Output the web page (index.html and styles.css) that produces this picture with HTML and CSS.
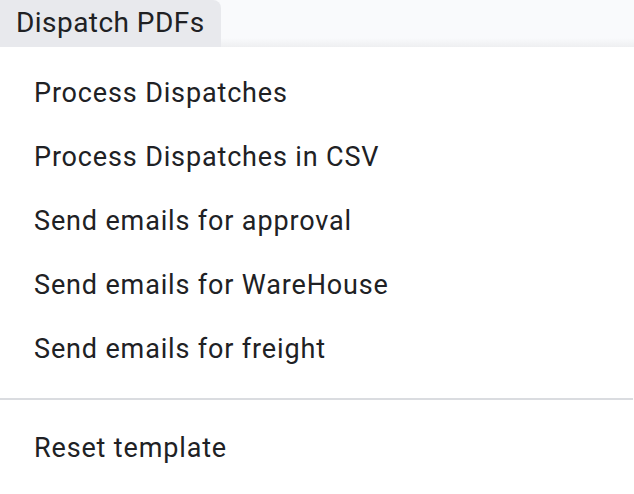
FILE: index.html
```html
<!DOCTYPE html>
<html>
<head>
<meta charset="utf-8">
<link rel="stylesheet" href="styles.css">
</head>
<body>
<div class="bar">
  <div class="tab">Dispatch PDFs</div>
</div>
<div class="menu">
  <div class="item">Process Dispatches</div>
  <div class="item">Process Dispatches in CSV</div>
  <div class="item">Send emails for approval</div>
  <div class="item">Send emails for WareHouse</div>
  <div class="item">Send emails for freight</div>
  <div class="sep"></div>
  <div class="item">Reset template</div>
</div>
</body>
</html>
```
FILE: styles.css
```css
html, body {
  margin: 0;
  padding: 0;
  background: #ffffff;
  font-family: Roboto, "Noto Sans", sans-serif;
  color: #202124;
}
.bar {
  height: 47px;
  background: linear-gradient(to bottom, #f9fafc 0, #f9fafc 38px, #eeeff1 47px);
  display: flex;
  align-items: stretch;
}
.tab {
  width: 205px;
  padding-left: 16px;
  background: #e8e9ed;
  border-top-right-radius: 8px;
  font-size: 28px;
  letter-spacing: 0.45px;
  line-height: 45px;
}
.menu {
  background: #ffffff;
  border-bottom-left-radius: 8px;
  padding-top: 14px;
  width: 633px;
}
.item {
  height: 64px;
  line-height: 64px;
  padding-left: 34px;
  font-size: 27px;
  letter-spacing: 0.85px;
}
.sep {
  height: 2px;
  background: #dadce0;
  margin: 17px 0 16px 0;
}
```
